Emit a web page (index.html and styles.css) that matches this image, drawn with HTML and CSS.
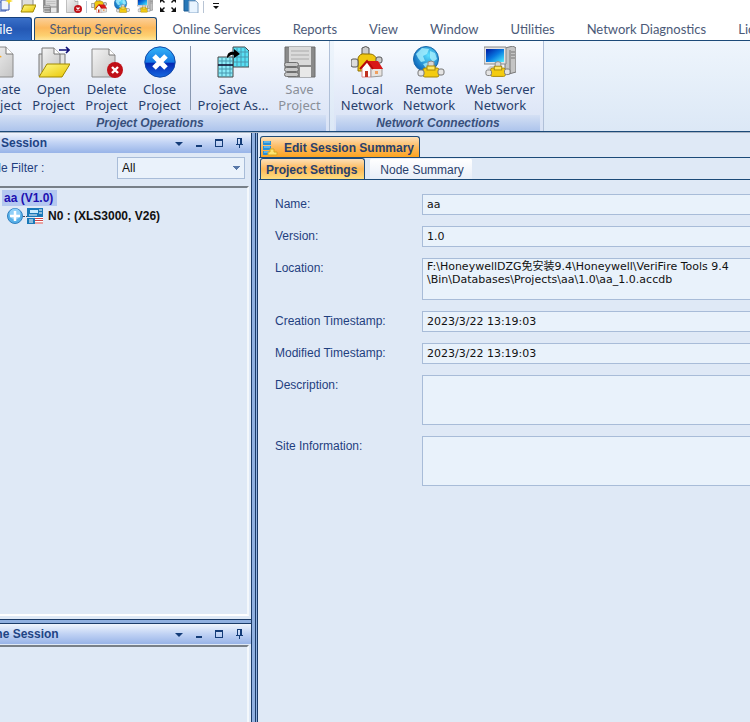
FILE: index.html
```html
<!DOCTYPE html>
<html lang="en">
<head>
    <meta charset="UTF-8">
    <meta name="viewport" content="width=device-width, initial-scale=1.0">
    <title>VeriFire Tools</title>
    <link rel="stylesheet" href="styles.css">
</head>
<body>
    <!-- shared icons -->
    <svg class="sprites" aria-hidden="true">
        <defs>
            <linearGradient id="paper" x1="0" y1="0" x2="1" y2="1">
                <stop offset="0" stop-color="#f4f4f4"/><stop offset="1" stop-color="#c4c4c4"/>
            </linearGradient>
            <linearGradient id="blue" x1="0" y1="0" x2="0" y2="1">
                <stop offset="0" stop-color="#35b4f8"/><stop offset=".5" stop-color="#1478e4"/><stop offset=".55" stop-color="#0428b4"/><stop offset="1" stop-color="#1668e0"/>
            </linearGradient>
            <linearGradient id="folder" x1="0" y1="0" x2="1" y2="1">
                <stop offset="0" stop-color="#fffb8a"/><stop offset="1" stop-color="#e8c400"/>
            </linearGradient>
            <linearGradient id="screen" x1="0" y1="0" x2="1" y2="1">
                <stop offset="0" stop-color="#0018a0"/><stop offset=".5" stop-color="#0878e0"/><stop offset="1" stop-color="#50f0ff"/>
            </linearGradient>
            <radialGradient id="globe" cx=".6" cy=".35" r=".7">
                <stop offset="0" stop-color="#5ce0ff"/><stop offset="1" stop-color="#0860b8"/>
            </radialGradient>
            <symbol id="i-page" viewBox="0 0 32 32">
                <path d="M4 1h17l7 7v23H4z" fill="url(#paper)" stroke="#8a8a8a"/>
                <path d="M21 1v7h7" fill="#fff" stroke="#777"/>
            </symbol>
            <symbol id="i-new" viewBox="0 0 32 32">
                <use href="#i-page"/>
                <path d="M8 0l2 5 5-2-2 5 4 3-5 1v5l-4-4-4 4V12l-4-1 4-3-2-5 4 2z" fill="#f8a820"/>
            </symbol>
            <symbol id="i-newdoc" viewBox="0 0 16 16">
                <path d="M1 5h8v9H1z" fill="#c8dcf4" stroke="#3858b0"/>
                <path d="M4 3h8v10H4z" fill="#f0f4fc" stroke="#3858b0"/>
                <path d="M12 0l1 3 3 1-3 1-1 3-1-3-3-1 3-1z" fill="#f8d820"/>
            </symbol>
            <symbol id="i-open" viewBox="0 0 32 32">
                <path d="M1 12V8h5v22H1z" fill="#ddd" stroke="#777"/>
                <path d="M17 8h10v14H17z" fill="#e4e4e4" stroke="#777"/>
                <path d="M4 2h12l6 6v18H4z" fill="url(#paper)" stroke="#777"/>
                <path d="M16 2v6h6" fill="#fff" stroke="#777"/>
                <path d="M21 4h10M28 1l3 3-3 3" fill="none" stroke="#101078" stroke-width="1.6"/>
                <path d="M9 18h23l-8 13H1z" fill="url(#folder)" stroke="#a08800"/>
            </symbol>
            <symbol id="i-delete" viewBox="0 0 32 32">
                <path d="M1 3h17l6 6v22H1z" fill="url(#paper)" stroke="#8a8a8a"/>
                <path d="M18 3v6h6" fill="#fff" stroke="#777"/>
                <circle cx="24" cy="24" r="8" fill="#c01018"/>
                <path d="M21 21l6 6m0-6l-6 6" stroke="#fff" stroke-width="2.4"/>
            </symbol>
            <symbol id="i-close" viewBox="0 0 32 32">
                <circle cx="16" cy="16" r="15.2" fill="url(#blue)" stroke="#1048a8"/>
                <path d="M10 10l12 12m0-12L10 22" stroke="#fff" stroke-width="5"/>
            </symbol>
            <symbol id="i-saveas" viewBox="0 0 32 32">
                <path d="M16 1h12l4 4v16H16z" fill="#58e0f4" stroke="#444"/>
                <path d="M16 6h16M16 11h16M16 16h16M20 1v20M24 1v20M28 1v20" stroke="#4898b0" fill="none"/>
                <path d="M1 11h15v20H1z" fill="#8cecf8" stroke="#444"/>
                <path d="M1 15h15M1 23h15M1 27h15M5 11v20M9 11v20M13 11v20" stroke="#4898b0" fill="none"/>
                <path d="M1 19h15" stroke="#113" stroke-width="1.6"/>
                <path d="M10 12c0-5 3-7 7-6V3l6 5-6 4V9c-3-1-4 1-7 3z" fill="#000"/>
            </symbol>
            <symbol id="i-save" viewBox="0 0 32 32">
                <path d="M1 1h30v30H4V22H1z" fill="#8a8a8a" stroke="#6c6c6c"/>
                <path d="M5 1h22v18H5z" fill="#dadada"/>
                <path d="M7 5h18M7 9h18M7 13h18" stroke="#aaa"/>
                <path d="M16 21h11v10H16z" fill="#e8e8e8"/>
                <g fill="#c8c8c8" stroke="#707070"><rect x=".5" y="16.500" width="14" height="4" rx="2"/><rect x=".5" y="21.500" width="14" height="4" rx="2"/><rect x=".5" y="26.500" width="14" height="4" rx="2"/></g>
            </symbol>
            <symbol id="i-pipe" viewBox="0 0 28 18">
                <path d="M11 8V2q3-2 6 0v6" fill="#d8d8d8" stroke="#888"/>
                <rect x="6" y="8" width="16" height="9" rx="2" fill="#f4cc10" stroke="#a88808"/>
                <rect x="10" y="6" width="8" height="4" fill="#ffe860" stroke="#a88808"/>
                <rect x="1" y="10" width="6" height="6" rx="2" fill="#e4e4e4" stroke="#777"/>
                <rect x="21" y="9" width="6" height="6" rx="2" fill="#e4e4e4" stroke="#777"/>
            </symbol>
            <symbol id="i-local" viewBox="0 0 32 32">
                <path d="M11 9V2q4-3 7 0v7" fill="#ccc" stroke="#555"/>
                <path d="M7 12q2-5 7-4h5q5 0 7 6l-6 11H7z" fill="#f0c810" stroke="#907000"/>
                <rect x="0" y="13" width="7" height="8" rx="2" fill="#ddd" stroke="#555"/>
                <rect x="25" y="11" width="6" height="6" rx="2" fill="#ccc" stroke="#555"/>
                <path d="M11 22l5-6 4 6v9h-9z" fill="#fff" stroke="#d88"/>
                <path d="M20 22h11v8l-11 1z" fill="#e8e4e0" stroke="#999"/>
                <path d="M16 15h11l5 8H21z" fill="#d81818"/><path d="M9 23l7-8 6 8" fill="none" stroke="#b80808" stroke-width="2"/>
                <path d="M14 25h3v6h-3z" fill="#c03020"/><path d="M24 25h3v3h-3z" fill="#f0a060"/>
            </symbol>
            <symbol id="i-remote" viewBox="0 0 32 32">
                <circle cx="13" cy="13" r="12.500" fill="url(#globe)" stroke="#1868a8"/>
                <path d="M3 8l6-6 7 1-2 5-4 2 2 5-4 1-3-4zM17 5l5 2 2 6-4 3-3-4zM10 18l6-2 2 4-4 4z" fill="#a8f0ff" opacity=".8"/>
                <use href="#i-pipe" x="4" y="14" width="28" height="18"/>
            </symbol>
            <symbol id="i-web" viewBox="0 0 32 32">
                <path d="M21 2l8-2 3 2v24l-7 2-4-2z" fill="#c4c4c4" stroke="#777"/>
                <path d="M26 4v23M27 6h4M27 9h4M27 12h4" stroke="#777"/>
                <path d="M0 1h22v17H0z" fill="#e4e4e4" stroke="#888"/><path d="M2 3h18v13H2z" fill="url(#screen)"/>
                <path d="M6 20h9l3 3H3z" fill="#ccc"/>
                <use href="#i-pipe" x="1" y="14" width="26" height="18"/>
            </symbol>
            <symbol id="i-expand" viewBox="0 0 16 16">
                <path d="M0 1h5L3 3l2 2-1 1-2-2-2 2zM16 1v5l-2-2-2 2-1-1 2-2-2-2zM0 15v-5l2 2 2-2 1 1-2 2 2 2zM16 15h-5l2-2-2-2 1-1 2 2 2-2z" fill="#111"/>
            </symbol>
            <symbol id="i-paste" viewBox="0 0 16 16">
                <path d="M1 1h11v13H1z" fill="#2878b8" stroke="#185890"/><path d="M4 0h5v3H4z" fill="#aaa"/>
                <path d="M6 4h7l2 2v10H6z" fill="#e8f4ff" stroke="#88a8c8"/>
            </symbol>
            <symbol id="i-folder" viewBox="0 0 16 16">
                <path d="M2 1h9l2 2v9H2z" fill="#ddd" stroke="#888"/><path d="M4 8h12l-3 7H1z" fill="url(#folder)" stroke="#a08800"/>
            </symbol>
            <symbol id="i-menu" viewBox="0 0 12 12"><path d="M2 5h8L6 9z"/></symbol>
            <symbol id="i-min" viewBox="0 0 12 12"><path d="M3 8h6v2H3z"/></symbol>
            <symbol id="i-max" viewBox="0 0 12 12"><path d="M2 2h8v8H2zm1 2v5h6V4z" fill-rule="evenodd"/></symbol>
            <symbol id="i-pin" viewBox="0 0 12 12"><path d="M4 1h5v6h1v1H7v3H6V8H3V7h1zm1 1v5h2V2z" fill-rule="evenodd"/></symbol>
        </defs>
    </svg>

    <div class="window">
        <div class="quick-bar">
            <button aria-label="Create Project"><svg><use href="#i-newdoc"/></svg></button>
            <button aria-label="Open Project"><svg><use href="#i-folder"/></svg></button>
            <button aria-label="Save Project"><svg><use href="#i-save"/></svg></button>
            <button aria-label="Delete Project"><svg><use href="#i-delete"/></svg></button>
            <span class="quick-sep"></span>
            <button aria-label="Local Network"><svg><use href="#i-local"/></svg></button>
            <button aria-label="Remote Network"><svg><use href="#i-remote"/></svg></button>
            <button aria-label="Web Server Network"><svg><use href="#i-web"/></svg></button>
            <button aria-label="Full Screen"><svg><use href="#i-expand"/></svg></button>
            <button aria-label="Paste"><svg><use href="#i-paste"/></svg></button>
            <span class="quick-sep"></span>
            <button aria-label="Customize"><svg viewBox="0 0 16 16"><path d="M5 6h6v1H5zM5 9h6l-3 3z" fill="#111"/></svg></button>
        </div>

        <nav class="ribbon-tabs">
            <button class="ribbon-tab file">File</button>
            <button class="ribbon-tab active">Startup Services</button>
            <button class="ribbon-tab">Online Services</button>
            <button class="ribbon-tab">Reports</button>
            <button class="ribbon-tab">View</button>
            <button class="ribbon-tab">Window</button>
            <button class="ribbon-tab">Utilities</button>
            <button class="ribbon-tab">Network Diagnostics</button>
            <button class="ribbon-tab">License</button>
        </nav>

        <div class="ribbon">
            <section class="group">
                <div class="group-buttons">
                    <button class="tool"><svg><use href="#i-new"/></svg>Create<br>Project</button>
                    <button class="tool"><svg><use href="#i-open"/></svg>Open<br>Project</button>
                    <button class="tool"><svg><use href="#i-delete"/></svg>Delete<br>Project</button>
                    <button class="tool"><svg><use href="#i-close"/></svg>Close<br>Project</button>
                    <span class="tool-sep"></span>
                    <button class="tool wide"><svg><use href="#i-saveas"/></svg>Save<br>Project As...</button>
                    <button class="tool" disabled><svg><use href="#i-save"/></svg>Save<br>Project</button>
                </div>
                <h2 class="group-title">Project Operations</h2>
            </section>
            <section class="group">
                <div class="group-buttons">
                    <button class="tool net"><svg><use href="#i-local"/></svg>Local<br>Network</button>
                    <button class="tool net"><svg><use href="#i-remote"/></svg>Remote<br>Network</button>
                    <button class="tool wide"><svg><use href="#i-web"/></svg>Web Server<br>Network</button>
                </div>
                <h2 class="group-title">Network Connections</h2>
            </section>
        </div>

        <div class="workspace">
            <aside class="sidebar">
                <section class="panel edit-panel">
                    <header class="panel-header">
                        <h2 class="panel-title short">Session</h2>
                        <button aria-label="Menu"><svg><use href="#i-menu"/></svg></button>
                        <button aria-label="Minimize"><svg><use href="#i-min"/></svg></button>
                        <button aria-label="Maximize"><svg><use href="#i-max"/></svg></button>
                        <button aria-label="Pin"><svg><use href="#i-pin"/></svg></button>
                    </header>
                    <div class="filter">
                        <label for="node-filter">Node Filter :</label>
                        <select id="node-filter"><option>All</option></select>
                    </div>
                    <div class="tree">
                        <div class="tree-root"><span class="selected">aa (V1.0)</span></div>
                        <div class="tree-node">
                            <svg class="plus" viewBox="0 0 16 16"><circle cx="8" cy="8" r="7.500" fill="#58b0e8" stroke="#3080c0"/><circle cx="8" cy="6" r="5.500" fill="#90d0f8"/><path d="M8 3v10M3 8h10" stroke="#fff" stroke-width="2.500"/></svg>
                            <span class="dots"></span>
                            <svg class="device" viewBox="0 0 16 16"><path d="M0 0h16v9H0z" fill="#1878b8"/><path d="M3 2h8v3H3z" fill="#c8ecff"/><path d="M0 10h8v6H0z" fill="#1878b8"/><path d="M2 7h8M2 12h4M2 14h4M12 2h3M12 5h3" stroke="#fff"/><path d="M8 9h8v7H8z" fill="#fff"/><path d="M8 10.500h8M8 12.500h8M8 15h8" stroke="#d04848"/></svg>
                            <span>N0 : (XLS3000, V26)</span>
                        </div>
                    </div>
                </section>
                <section class="panel online-panel">
                    <header class="panel-header">
                        <h2 class="panel-title">Online Session</h2>
                        <button aria-label="Menu"><svg><use href="#i-menu"/></svg></button>
                        <button aria-label="Minimize"><svg><use href="#i-min"/></svg></button>
                        <button aria-label="Maximize"><svg><use href="#i-max"/></svg></button>
                        <button aria-label="Pin"><svg><use href="#i-pin"/></svg></button>
                    </header>
                    <div class="tree"></div>
                </section>
            </aside>
            <div class="splitter"></div>

            <main class="document">
                <div class="doc-tabs">
                    <button class="doc-tab main-tab">
                        <svg viewBox="0 0 16 16"><path d="M1 1h8v4H1zM1 6h8v4H1zM1 11h8v4H1z" fill="#2890d8"/><path d="M2 2h6M2 7h6M2 12h6" stroke="#90d8ff"/><path d="M8 9h4v3h3v3H6v-3h2z" fill="#ffe470" stroke="#d8a820"/></svg>
                        Edit Session Summary
                    </button>
                </div>
                <div class="doc-tabs">
                    <button class="doc-tab">Project Settings</button>
                    <button class="doc-tab idle">Node Summary</button>
                </div>
                <form class="settings">
                    <label for="name">Name:</label>
                    <input id="name" value="aa">
                    <label for="version">Version:</label>
                    <input id="version" value="1.0">
                    <label for="location">Location:</label>
                    <textarea id="location" class="location">F:\HoneywellDZG免安装9.4\Honeywell\VeriFire Tools 9.4
\Bin\Databases\Projects\aa\1.0\aa_1.0.accdb</textarea>
                    <label for="created">Creation Timestamp:</label>
                    <input id="created" value="2023/3/22 13:19:03">
                    <label for="modified">Modified Timestamp:</label>
                    <input id="modified" value="2023/3/22 13:19:03">
                    <label for="description">Description:</label>
                    <textarea id="description"></textarea>
                    <label for="site">Site Information:</label>
                    <textarea id="site"></textarea>
                </form>
            </main>
        </div>
    </div>
</body>
</html>
```
FILE: styles.css
```css
* {
    box-sizing: border-box;
}

body {
    margin: 0;
    overflow: hidden;
    font-family: "Liberation Sans", Arial, sans-serif;
    font-size: 12px;
    color: #1f3f7f;
    background: #dfe9f6;
}

button {
    margin: 0;
    padding: 0;
    border: 0;
    background: none;
    font: inherit;
    color: inherit;
}

h2 {
    margin: 0;
    font-size: 12px;
}

.sprites {
    position: absolute;
    width: 0;
    height: 0;
}

/* the left edge of the window runs off screen */
.window {
    display: flex;
    flex-direction: column;
    height: 100vh;
    margin-left: -28px;
}

/* quick access bar */
.quick-bar {
    display: flex;
    align-items: flex-end;
    gap: 7px;
    height: 17px;
    padding: 0 0 4px 25px;
    background: #fff;
    flex: none;
}

.quick-bar svg {
    display: block;
    width: 16px;
    height: 16px;
}

.quick-sep {
    width: 1px;
    height: 12px;
    margin: 0 -3px;
    background: #b8c4d4;
}

/* ribbon */
.ribbon-tabs {
    display: flex;
    flex: none;
    height: 24px;
    overflow: hidden;
    background: #fff;
    border-bottom: 1px solid #1c4a78;
}

.ribbon-tab {
    flex: none;
    padding: 0 16px;
    font: 13px Lato, "Noto Sans", sans-serif;
    color: #4c5a78;
}

.ribbon-tab.file {
    padding: 0 19px;
    margin-right: 2px;
    color: #fff;
    border: 1px solid #16407c;
    border-bottom: 0;
    border-radius: 0 3px 0 0;
    background: linear-gradient(#3a70c8, #2458b4 50%, #2f6cc8);
}

.ribbon-tab.active {
    padding: 0 14px;
    border: 1px solid #1c4a78;
    border-bottom: 0;
    border-radius: 3px 3px 0 0;
    background: linear-gradient(#fbd09a, #fcb85c 45%, #fdd070 80%, #ffe69a);
}

.ribbon {
    display: flex;
    flex: none;
    height: 91px;
    background: linear-gradient(#eef5fc, #dce8f6);
    border-bottom: 1px solid #1c4a78;
}

.group {
    display: flex;
    flex-direction: column;
    padding: 0 3px 0 2px;
    margin-right: 4px;
    border-right: 1px solid #b0c0d8;
    background: linear-gradient(#f8fbff, #e4ebf9 60%, #d8e2f5);
}

.group-buttons {
    display: flex;
    align-items: flex-start;
    flex: 1;
}

.tool {
    width: 53px;
    padding-top: 5px;
    font: 13px/16px "Noto Sans", sans-serif;
    color: #28406c;
    white-space: nowrap;
}

.tool svg {
    display: block;
    width: 32px;
    height: 32px;
    margin: 0 auto 3px;
}

.tool.net {
    width: 62px;
}

.tool.wide {
    width: 80px;
}

.tool:disabled {
    color: #8a8f98;
}

.tool-sep {
    width: 1px;
    height: 64px;
    margin: 5px 2px 0 4px;
    background: #8898b0;
}

.group-title {
    height: 16px;
    line-height: 16px;
    text-align: center;
    font-style: italic;
    color: #38507c;
    background: linear-gradient(#d4e0f4, #adc4ec);
}

/* docked panels */
.workspace {
    display: flex;
    flex: 1;
    min-height: 0;
    border-top: 1px solid #a8b4c4;
}

.sidebar {
    display: flex;
    flex-direction: column;
    width: 279px;
    flex: none;
}

.panel {
    display: flex;
    flex-direction: column;
}

.edit-panel {
    flex: 1;
    padding-bottom: 3px;
    border-bottom: 1px solid #1c3c68;
}

.online-panel {
    height: 99px;
    margin-top: 3px;
    border-top: 1px solid #1c3c68;
    box-shadow: 0 -3px #90b0e0;
}

.panel-header {
    display: flex;
    align-items: center;
    flex: none;
    height: 20px;
    padding-right: 2px;
    background: linear-gradient(#f0f5fd, #c0d2f4 50%, #98b4e8);
}

.panel-title {
    flex: 1;
    color: #1f4484;
}

.panel-title.short {
    padding-left: 29px;
}

.panel-header button {
    width: 20px;
}

.panel-header svg {
    display: block;
    width: 12px;
    height: 12px;
    margin: auto;
    fill: #143c78;
}

.filter {
    display: flex;
    align-items: center;
    justify-content: space-between;
    padding: 4px 6px 7px 7px;
}

.filter select {
    width: 128px;
    height: 22px;
    padding: 0 4px;
    font: 12px "Liberation Sans", Arial, sans-serif;
    color: #111;
    border: 1px solid #a8bcd8;
    border-radius: 0;
    appearance: none;
    background: linear-gradient(135deg, #5878a8 50%, transparent 50%) right 3px center / 4px 4px no-repeat,
        linear-gradient(225deg, #5878a8 50%, transparent 50%) right 7px center / 4px 4px no-repeat, #eaf2fb;
}

.tree {
    flex: 1;
    padding: 2px 0 0 28px;
    margin-right: 2px;
    font-weight: bold;
    color: #111;
    border-top: 2px solid #788088;
    border-right: 2px solid #f4f8fc;
    border-bottom: 2px solid #fff;
}

.online-panel .tree {
    margin-top: 1px;
    border-bottom: 0;
}

.tree-root,
.tree-node {
    display: flex;
    align-items: center;
}

.selected {
    height: 16px;
    padding: 0 4px 0 2px;
    margin-left: 2px;
    line-height: 16px;
    color: #2010b0;
    background: #b4c8f0;
}

.tree-node {
    height: 20px;
    padding-left: 7px;
}

.tree-node svg {
    width: 16px;
    height: 16px;
}

.dots {
    width: 4px;
    border-top: 1px dotted #445;
}

.device {
    margin-right: 5px;
}

.splitter {
    width: 7px;
    flex: none;
    background: #90b0e0;
    border-left: 1px solid #1c3c68;
    border-right: 3px double #1c3c68;
}

/* document area */
.document {
    flex: 1;
    min-width: 0;
    padding-top: 3px;
    padding-left: 1px;
}

.doc-tabs {
    display: flex;
    gap: 5px;
    height: 22px;
    padding-left: 1px;
    border-bottom: 1px solid #1c4a78;
}

.doc-tab {
    padding: 1px 7px 0 5px;
    font-weight: bold;
    color: #28406c;
    border: 1px solid #1c4a78;
    border-bottom: 0;
    border-radius: 3px 3px 0 0;
    background: linear-gradient(#fde0b8, #fdb858 50%, #fede80);
}

.main-tab {
    display: flex;
    align-items: center;
    gap: 6px;
    padding: 1px 5px 0 1px;
    background: linear-gradient(#fde0b8, #fcba60 50%, #fca420);
}

.main-tab svg {
    width: 16px;
    height: 16px;
}

.doc-tab.idle {
    padding: 1px 7px 0 9px;
    font-weight: normal;
    border-color: transparent;
    background: linear-gradient(#fff, #e8eef8);
}

.settings {
    display: grid;
    grid-template-columns: 147px 1fr;
    row-gap: 11px;
    padding: 14px 0 0 16px;
}

.settings label {
    padding-top: 3px;
}

.settings input,
.settings textarea {
    display: block;
    width: 100%;
    height: 21px;
    margin: 0;
    padding: 0 4px;
    font: 11px/13px "DejaVu Sans", "Noto Sans CJK SC", sans-serif;
    color: #111;
    background: #e9f2fb;
    border: 1px solid #a8bcd8;
    border-right: 0;
    border-radius: 0;
}

.settings textarea {
    height: 50px;
    padding-top: 1px;
    resize: none;
    overflow: hidden;
    white-space: pre;
}

.settings .location {
    height: 42px;
}
```
